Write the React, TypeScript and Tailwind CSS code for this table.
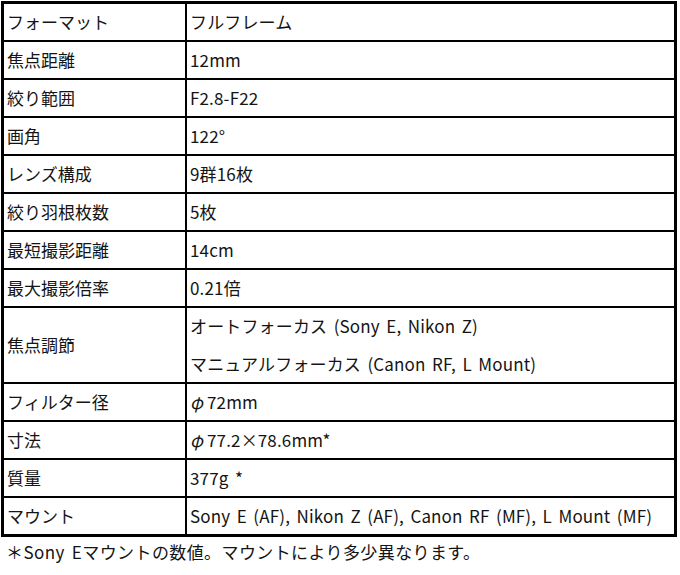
import React from 'react';

type Spec = { label: string; values: string[] };

const SPECS: Spec[] = [
  { label: 'フォーマット', values: ['フルフレーム'] },
  { label: '焦点距離', values: ['12mm'] },
  { label: '絞り範囲', values: ['F2.8-F22'] },
  { label: '画角', values: ['122°'] },
  { label: 'レンズ構成', values: ['9群16枚'] },
  { label: '絞り羽根枚数', values: ['5枚'] },
  { label: '最短撮影距離', values: ['14cm'] },
  { label: '最大撮影倍率', values: ['0.21倍'] },
  {
    label: '焦点調節',
    values: ['オートフォーカス (Sony E, Nikon Z)', 'マニュアルフォーカス (Canon RF, L Mount)'],
  },
  { label: 'フィルター径', values: ['φ72mm'] },
  { label: '寸法', values: ['φ77.2×78.6mm*'] },
  { label: '質量', values: ['377g *'] },
  { label: 'マウント', values: ['Sony E (AF), Nikon Z (AF), Canon RF (MF), L Mount (MF)'] },
];

// the diameter sign sits in a full-width cell like the source sheet
const Value = ({ text }: { text: string }) => {
  if (!text.startsWith('φ')) return <>{text}</>;
  return (
    <>
      <span className="inline-block w-[17px] italic">φ</span>
      {text.slice(1)}
    </>
  );
};

const SpecRow = ({ spec, last }: { spec: Spec; last: boolean }) => {
  const tall = spec.values.length > 1;
  const height = tall ? 'h-[76px]' : last ? 'h-[36px]' : 'h-[38px]';
  return (
    <div className={`flex ${height} ${last ? '' : 'border-b-2 border-black'}`}>
      <div className="w-[183px] shrink-0 border-r-2 border-black flex items-center pl-[3px]">
        {spec.label}
      </div>
      <div className="flex-1 flex flex-col justify-center pl-[3px] tracking-[0.15px] [word-spacing:2.5px]">
        {spec.values.map((v, i) => (
          <div key={i} className={tall ? 'leading-[38px]' : ''}>
            <Value text={v} />
          </div>
        ))}
      </div>
    </div>
  );
};

export default function App() {
  return (
    <div
      className="w-[680px] h-[575px] bg-white text-[17px] text-[#141414] overflow-hidden"
      style={{ fontFamily: '"Noto Sans CJK JP", "Noto Sans", sans-serif' }}
    >
      <div className="ml-px mt-px w-[676px] border-[3px] border-black">
        {SPECS.map((s, i) => (
          <SpecRow key={s.label} spec={s} last={i === SPECS.length - 1} />
        ))}
      </div>
      <p className="mt-[3px] pl-[6px] leading-[24px] tracking-[0.4px] [word-spacing:3px]">
        ＊Sony Eマウントの数値。マウントにより多少異なります。
      </p>
    </div>
  );
}
